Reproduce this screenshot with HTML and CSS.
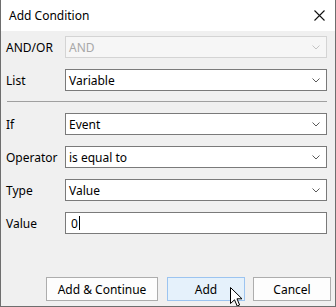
FILE: index.html
```html
<!DOCTYPE html>
<html lang="en">
<head>
  <meta charset="UTF-8" />
  <title>Add Condition</title>
  <link rel="stylesheet" href="styles.css">
</head>
<body>
  <div class="window">
    <div class="titlebar">
      <span class="title">Add Condition</span>
      <svg class="close" width="11" height="11" viewBox="0 0 11 11">
        <path d="M0.5 0.5 L10.5 10.5 M10.5 0.5 L0.5 10.5" stroke="#111" stroke-width="1.1" fill="none" />
      </svg>
    </div>

    <div class="content">
      <div class="row">
        <label>AND/OR</label>
        <div class="combo disabled">
          <span>AND</span>
          <svg class="chev" width="8" height="5" viewBox="0 0 8 5"><path d="M0.5 0.5 L4 4 L7.5 0.5" /></svg>
        </div>
      </div>
      <div class="row">
        <label>List</label>
        <div class="combo">
          <span>Variable</span>
          <svg class="chev" width="8" height="5" viewBox="0 0 8 5"><path d="M0.5 0.5 L4 4 L7.5 0.5" /></svg>
        </div>
      </div>

      <div class="separator"></div>

      <div class="row">
        <label>If</label>
        <div class="combo">
          <span>Event</span>
          <svg class="chev" width="8" height="5" viewBox="0 0 8 5"><path d="M0.5 0.5 L4 4 L7.5 0.5" /></svg>
        </div>
      </div>
      <div class="row">
        <label>Operator</label>
        <div class="combo">
          <span>is equal to</span>
          <svg class="chev" width="8" height="5" viewBox="0 0 8 5"><path d="M0.5 0.5 L4 4 L7.5 0.5" /></svg>
        </div>
      </div>
      <div class="row">
        <label>Type</label>
        <div class="combo">
          <span>Value</span>
          <svg class="chev" width="8" height="5" viewBox="0 0 8 5"><path d="M0.5 0.5 L4 4 L7.5 0.5" /></svg>
        </div>
      </div>
      <div class="row">
        <label>Value</label>
        <div class="textbox"><span>0</span><span class="caret"></span></div>
      </div>
    </div>

    <div class="buttons">
      <button class="btn wide">Add &amp; Continue</button>
      <button class="btn hover">Add</button>
      <button class="btn">Cancel</button>
    </div>

    <!-- mouse pointer over the Add button -->
    <svg class="pointer" width="13" height="20" viewBox="0 0 13 20">
      <path d="M0.5 0.5 L0.5 16.5 L4.5 12.8 L7.2 19 L9.6 18 L7 11.8 L12 11.8 Z" fill="#fff" stroke="#000" stroke-width="1" stroke-linejoin="miter" />
    </svg>
  </div>
</body>
</html>
```

FILE: styles.css
```css
* {
  margin: 0;
  padding: 0;
  box-sizing: border-box;
}

body {
  font-family: 'Noto Sans', 'Segoe UI', sans-serif;
  font-size: 12px;
  color: #000;
  background: #fff;
}

.window {
  position: relative;
  width: 336px;
  height: 307px;
  display: flex;
  flex-direction: column;
  background-color: #f0f0f0;
  border-left: 1px solid #6e6e6e;
  border-right: 1px solid #6e6e6e;
  border-bottom: 1px solid #6e6e6e;
  overflow: hidden;
}

.titlebar {
  height: 31px;
  background-color: #fff;
  display: flex;
  align-items: center;
  justify-content: space-between;
  padding: 0 10px 1px 8px;
}

.title {
  font-size: 12px;
}

.close {
  display: block;
}

.content {
  flex: 1;
  padding: 5px 8px 0 5px;
}

.row {
  display: flex;
  align-items: center;
  height: 22px;
  margin-bottom: 11px;
}

.row label {
  width: 59px;
  flex-shrink: 0;
}

.combo,
.textbox {
  flex: 1;
  height: 22px;
  display: flex;
  align-items: center;
  justify-content: space-between;
  background-color: #fff;
  border: 1px solid #7a7a7a;
  padding: 0 6px 0 3px;
}

.combo.disabled {
  background-color: #f6f6f6;
  border-color: #d4d4d4;
  color: #a8a8a8;
}

.chev {
  display: block;
  fill: none;
  stroke: #5a5a5a;
  stroke-width: 1;
}

.disabled .chev {
  stroke: #c4c4c4;
}

.textbox {
  justify-content: flex-start;
  padding-left: 5px;
}

.caret {
  display: inline-block;
  width: 1px;
  height: 14px;
  margin-left: 1px;
  background-color: #000;
}

.separator {
  height: 1px;
  background-color: #a0a0a0;
  margin: -1px 0 11px 1px;
}

.buttons {
  display: flex;
  justify-content: flex-end;
  gap: 8px;
  padding: 0 4px 5px 0;
}

.btn {
  font-family: inherit;
  font-size: 12px;
  height: 24px;
  width: 78px;
  background-color: #fdfdfd;
  border: 1px solid #adadad;
  color: #000;
}

.btn.wide {
  width: 112px;
  margin-right: 1px;
}

.btn.hover {
  background-color: #e5f1fb;
  border-color: #9cc4f0;
}

.pointer {
  position: absolute;
  left: 229px;
  top: 287px;
}
```
